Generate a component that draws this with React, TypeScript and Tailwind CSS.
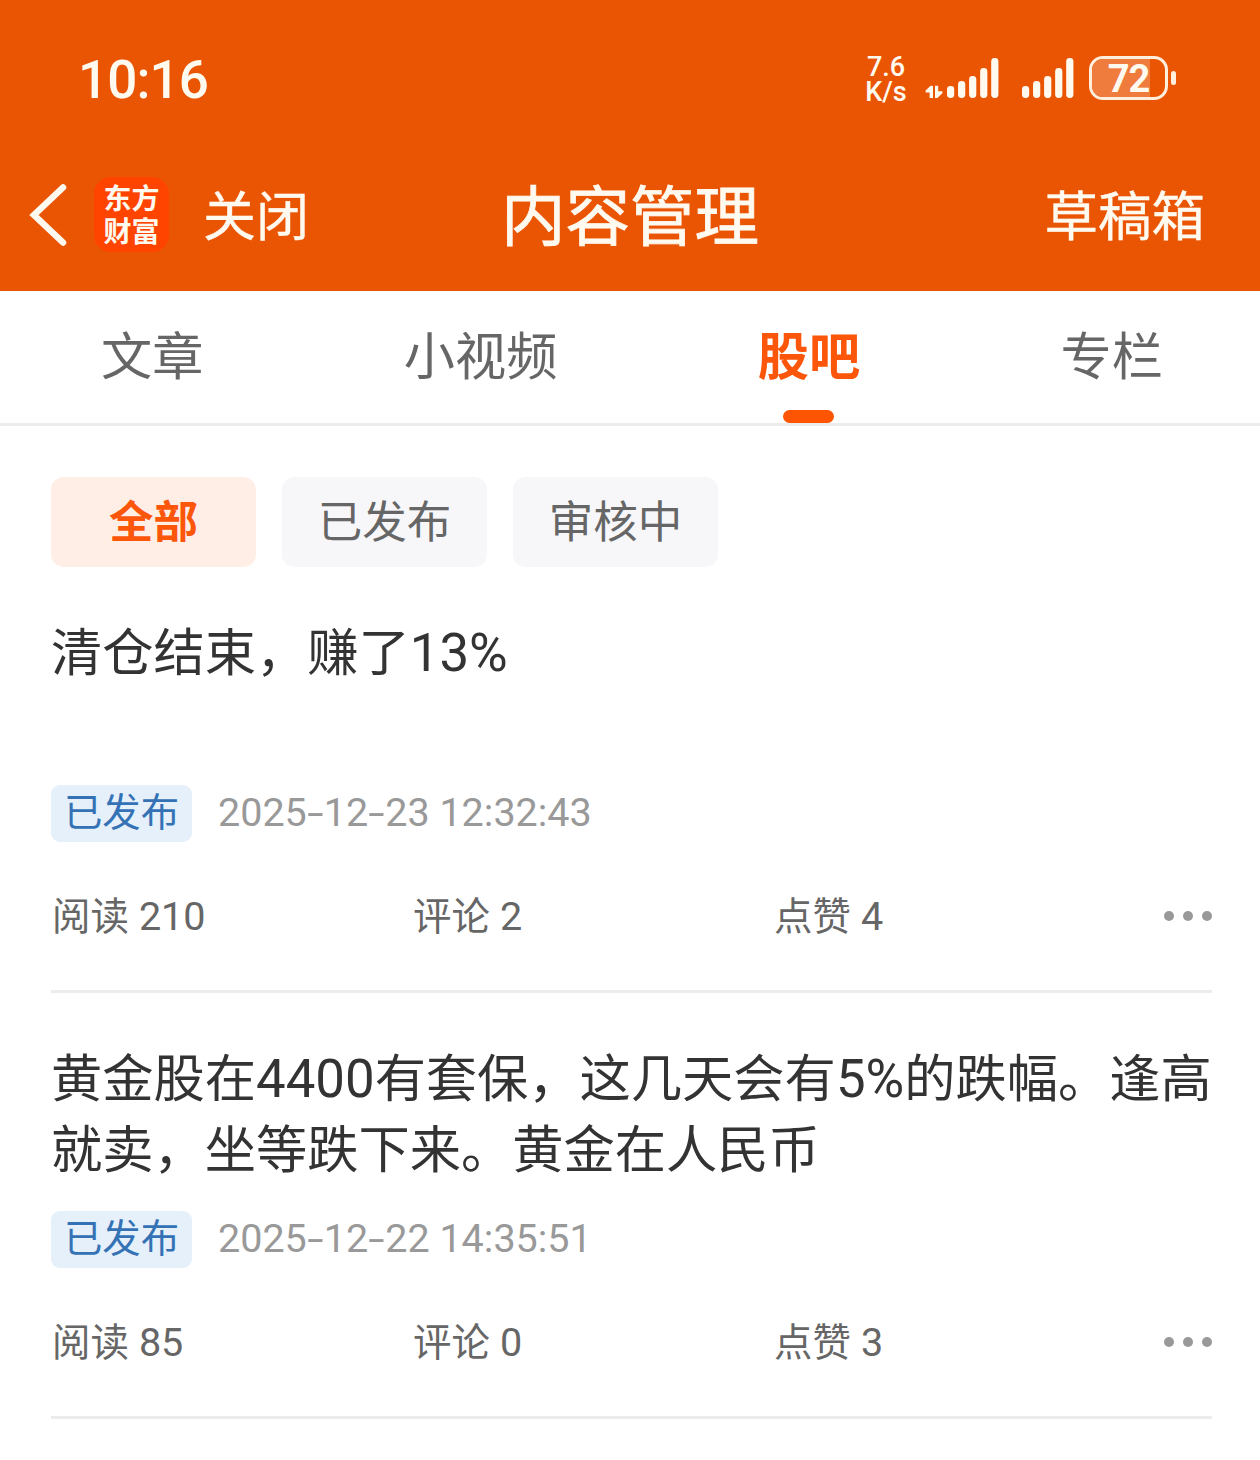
import clsx from "clsx";

const tabs = ["文章", "小视频", "股吧", "专栏"];
const filters = ["全部", "已发布", "审核中"];

const posts = [
  {
    lines: ["清仓结束，赚了13%"],
    time: "2025-12-23 12:32:43",
    reads: 210,
    comments: 2,
    likes: 4,
  },
  {
    lines: ["黄金股在4400有套保，这几天会有5%的跌幅。逢高", "就卖，坐等跌下来。黄金在人民币"],
    time: "2025-12-22 14:35:51",
    reads: 85,
    comments: 0,
    likes: 3,
  },
];

const barHeights = [12, 17, 22, 30, 40];

// Numbers get a slightly larger latin face next to the CJK text
const Mixed = ({ text }: { text: string }) => (
  <>
    {text.split(/([0-9%]+)/).map((part, i) =>
      i % 2 ? (
        <span key={i} className="font-['Roboto'] text-[1.03em] leading-none">
          {part}
        </span>
      ) : (
        part
      )
    )}
  </>
);

const SignalBars = () => (
  <svg width="52" height="42" viewBox="0 0 52 42" fill="#fffaf0">
    {barHeights.map((h, i) => (
      <rect key={h} x={i * 11.05} y={41 - h} width="7.2" height={h} rx="3.4" />
    ))}
  </svg>
);

const StatusBar = () => (
  <div className="flex h-[156px] items-center pl-[78px] pr-[84px] text-[#fffaf0]">
    <div className="mt-[4px] font-['Roboto'] text-[53px] font-medium leading-none tracking-[-0.9px]">10:16</div>
    <div className="ml-auto flex items-center">
      <div className="mt-[4px] w-[42px] text-center font-['Roboto'] text-[27px] font-medium leading-[25px]">
        <div>7.6</div>
        <div>K/s</div>
      </div>
      <svg className="ml-[18px] mt-[27px]" width="18" height="14" viewBox="0 0 18 14" fill="#fffaf0">
        <path d="M8 1V13H4.6V7.4H0.6V5.6L5.6 0.8Z" />
        <path d="M10 0.8H13.2V6.2H17.4V8.2L12.4 13H10Z" />
      </svg>
      <div className="ml-[4px] flex gap-[23px]">
        <SignalBars />
        <SignalBars />
      </div>
      <div className="relative ml-[15px] flex h-[44px] w-[79px] items-center justify-center overflow-hidden rounded-[14px] border-[3px] border-[#ffefdc]">
        <div className="absolute inset-y-0 left-0 w-[58px] bg-[#ef7b3c]" />
        <span className="relative mt-[2px] font-['Roboto'] text-[38px] font-bold leading-[38px] tracking-[-1px]">72</span>
      </div>
      <div className="ml-[3px] h-[14px] w-[5px] rounded-full bg-[#ffefdc]" />
    </div>
  </div>
);

const NavBar = () => (
  <div className="grid h-[135px] grid-cols-3 items-start pt-[21px] text-[#fffaf0]">
    <div className="flex h-[75px] items-center pl-[29px]">
      <svg width="40" height="64" viewBox="0 0 40 64" fill="none" stroke="currentColor" strokeWidth="6.5" strokeLinecap="round" strokeLinejoin="miter">
        <path d="M34 4.5L5 32L34 59.5" />
      </svg>
      <div className="ml-[25px] flex h-[75px] w-[75px] flex-col items-center rounded-[17px] bg-[#ff4400] pt-[4px] text-[28px] font-bold leading-[33px]">
        <span>东方</span>
        <span>财富</span>
      </div>
      <span className="ml-[34px] h-[75px] whitespace-nowrap text-[53px] leading-[72px] [-webkit-text-stroke:0.4px]">
        关闭
      </span>
    </div>
    <h1 className="text-center text-[64.5px] leading-[70px] [-webkit-text-stroke:0.8px]">内容管理</h1>
    <span className="pr-[55px] text-right text-[53.5px] leading-[71px] [-webkit-text-stroke:0.4px]">草稿箱</span>
  </div>
);

const Tabs = () => (
  <div className="flex h-[135px] justify-between border-b-[3px] border-[#ececec] pl-[101px] pr-[97px]">
    {tabs.map((tab) => {
      const active = tab === "股吧";
      return (
        <div
          key={tab}
          className={clsx(
            "flex flex-col items-center text-[51.2px] leading-[124px]",
            active ? "font-bold text-[#fb560a]" : "text-[#666]"
          )}
        >
          <span className="h-[119px]">{tab}</span>
          {active && <span className="h-[13px] w-[51px] rounded-full bg-[#ff5500]" />}
        </div>
      );
    })}
  </div>
);

const Dots = () => (
  <div className="ml-auto flex gap-[9px]">
    <span className="size-[10px] rounded-full bg-[#999]" />
    <span className="size-[10px] rounded-full bg-[#999]" />
    <span className="size-[10px] rounded-full bg-[#999]" />
  </div>
);

const Stat = ({ label, value }: { label: string; value: number }) => (
  <span className="h-[56px] w-[361px] shrink-0 whitespace-pre pl-px [word-spacing:1.5px] last-of-type:w-auto">
    <Mixed text={`${label} ${value}`} />
  </span>
);

const Timestamp = ({ value }: { value: string }) => (
  <time className="ml-[26px] h-[57px] whitespace-pre font-['Roboto'] text-[39.5px] leading-[55px] text-[#999]">
    {value.split(/(-)/).map((part, i) =>
      part === "-" ? (
        <span key={i} className="inline-block w-[17px] scale-x-150 text-center">
          -
        </span>
      ) : (
        part
      )
    )}
  </time>
);

const Post = ({ post }: { post: (typeof posts)[number] }) => (
  <article className="mb-[49px] border-b-[3px] border-[#ececec] pb-[46px]">
    <h2 className="-mt-[2px] h-[144px] whitespace-nowrap text-[51.25px] leading-[71px] text-[#333]">
      {post.lines.map((line) => (
        <div key={line}>
          <Mixed text={line} />
        </div>
      ))}
    </h2>
    <div className="mt-[27px] flex h-[57px] items-center">
      <span className="flex h-[57px] w-[141px] justify-center rounded-[9px] bg-[#e5f0fa] text-[38.4px] leading-[49px] text-[#3472b5]">
        已发布
      </span>
      <Timestamp value={post.time} />
    </div>
    <div className="mt-[46px] flex h-[56px] items-center text-[38.4px] leading-[50px] text-[#666]">
      <Stat label="阅读" value={post.reads} />
      <Stat label="评论" value={post.comments} />
      <Stat label="点赞" value={post.likes} />
      <Dots />
    </div>
  </article>
);

const App = () => {
  return (
    <div
      lang="zh-CN"
      className="h-[1460px] w-[1260px] overflow-hidden bg-white font-['Noto_Sans_CJK_SC',sans-serif]"
    >
      <header className="bg-[#ea5504]">
        <StatusBar />
        <NavBar />
      </header>
      <Tabs />
      <main className="pl-[51px] pr-[48px] pt-[51px]">
        <div className="mb-[49px] flex gap-[26px]">
          {filters.map((filter, i) => (
            <button
              key={filter}
              className={clsx(
                "flex h-[90px] w-[205px] justify-center rounded-[13px] text-[44.5px] leading-[83px]",
                i === 0 ? "bg-[#ffeee6] font-bold text-[#fb560a]" : "bg-[#f7f7fa] text-[#666]"
              )}
            >
              {filter}
            </button>
          ))}
        </div>
        {posts.map((post) => (
          <Post key={post.time} post={post} />
        ))}
      </main>
    </div>
  );
};

export default App;
